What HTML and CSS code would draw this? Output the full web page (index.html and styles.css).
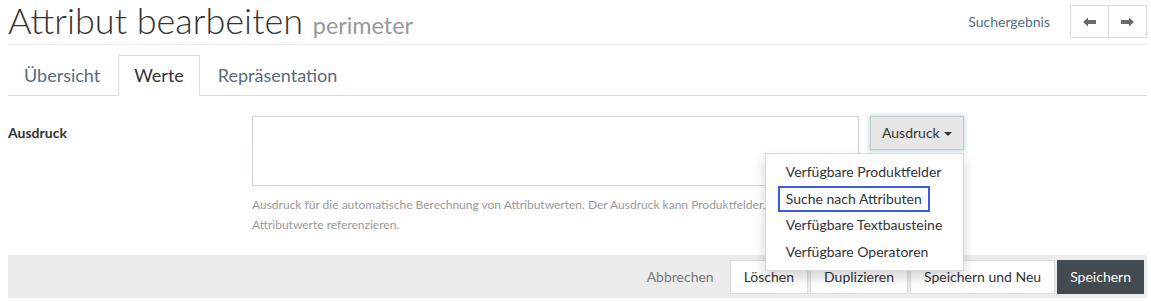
FILE: index.html
```html
<!DOCTYPE html>
<html>
<head>
  <title>Attribut bearbeiten</title>
  <link rel="stylesheet" href="styles.css">
</head>
<body>

<div class="page">
  <header class="page-header">
    <h1>Attribut bearbeiten <small>perimeter</small></h1>
    <div class="header-nav">
      <span class="search-result">Suchergebnis</span>
      <div class="btn-group">
        <button class="nav-btn" title="Zurück">
          <svg width="13" height="10" viewBox="0 0 13 10"><path d="M0 5 L5 0.5 V3 H13 V7 H5 V9.5 Z" fill="#6b6b6b"/></svg>
        </button>
        <button class="nav-btn" title="Weiter">
          <svg width="13" height="10" viewBox="0 0 13 10"><path d="M13 5 L8 0.5 V3 H0 V7 H8 V9.5 Z" fill="#6b6b6b"/></svg>
        </button>
      </div>
    </div>
  </header>

  <ul class="tabs">
    <li><a href="#">Übersicht</a></li>
    <li class="active"><a href="#">Werte</a></li>
    <li><a href="#">Repräsentation</a></li>
  </ul>

  <div class="form-row">
    <label class="control-label">Ausdruck</label>
    <div class="field">
      <textarea class="form-control"></textarea>
      <p class="help-block">Ausdruck für die automatische Berechnung von Attributwerten. Der Ausdruck kann Produktfelder, Textbausteine und Attributwerte referenzieren.</p>
    </div>
    <div class="dropdown">
      <button class="btn btn-toggle">Ausdruck <span class="caret"></span></button>
      <ul class="dropdown-menu">
        <li><a href="#">Verfügbare Produktfelder</a></li>
        <li><a href="#" class="focused">Suche nach Attributen</a></li>
        <li><a href="#">Verfügbare Textbausteine</a></li>
        <li><a href="#">Verfügbare Operatoren</a></li>
      </ul>
    </div>
  </div>

  <div class="form-actions">
    <a href="#" class="btn-link">Abbrechen</a>
    <button class="btn">Löschen</button>
    <button class="btn">Duplizieren</button>
    <button class="btn">Speichern und Neu</button>
    <button class="btn btn-primary">Speichern</button>
  </div>
</div>

</body>
</html>
```

FILE: styles.css
```css
body {
  font-family: Lato, 'Open Sans', sans-serif;
  font-size: 14px;
  line-height: 20px;
  color: #333;
  margin: 0;
  background: white;
}

.page {
  padding: 0 4px 0 8px;
}

.page-header {
  display: flex;
  justify-content: space-between;
  align-items: center;
  height: 40px;
  padding-bottom: 4px;
  border-bottom: 1px solid #eee;
}

h1 {
  margin: 0;
  font-size: 36px;
  font-weight: 300;
  line-height: 40px;
  color: #333;
}

h1 small {
  font-size: 23.4px;
  font-weight: 400;
  line-height: 1;
  color: #999;
}

.header-nav {
  display: flex;
  align-items: center;
  gap: 20px;
  margin-top: 3px;
}

.search-result {
  color: #5b6b7b;
}

.btn-group {
  display: flex;
}

.nav-btn {
  width: 39px;
  height: 33px;
  background: white;
  border: 1px solid #ddd;
  display: flex;
  align-items: center;
  justify-content: center;
  padding: 0;
  cursor: pointer;
}

.nav-btn + .nav-btn {
  margin-left: -1px;
}

.tabs {
  list-style: none;
  margin: 10px 0 0;
  padding: 0;
  display: flex;
  border-bottom: 1px solid #ddd;
}

.tabs li {
  margin-right: 2px;
  margin-bottom: -1px;
}

.tabs a {
  display: block;
  padding: 9px 15px 10px;
  font-size: 18px;
  line-height: 20px;
  color: #596a7c;
  text-decoration: none;
  border: 1px solid transparent;
}

.tabs .active a {
  color: #333;
  border-color: #ddd;
  border-bottom-color: white;
  background: white;
}

.form-row {
  display: grid;
  grid-template-columns: 244px 607px auto;
  margin-top: 20px;
}

.control-label {
  font-weight: bold;
  padding-top: 7px;
}

.form-control {
  display: block;
  box-sizing: border-box;
  width: 100%;
  height: 70px;
  margin: 0;
  border: 1px solid #ccd3d9;
  font-family: inherit;
  resize: none;
}

.help-block {
  width: 630px;
  margin: 9px 0 0;
  font-size: 12px;
  line-height: 20px;
  color: #999;
}

.dropdown {
  position: relative;
  margin-left: 11px;
  align-self: start;
  justify-self: start;
}

.btn {
  font-family: inherit;
  font-size: 14px;
  line-height: 20px;
  padding: 6px 12px;
  color: #333;
  background: white;
  border: 1px solid #d8dee2;
  cursor: pointer;
}

.btn-toggle {
  padding: 6px 11px;
  background: #e6e6e6;
  border-color: #c3cdd2;
  box-shadow: 0 0 4px 1px rgba(110, 165, 185, 0.45);
}

.caret {
  display: inline-block;
  width: 0;
  height: 0;
  margin-left: 1px;
  vertical-align: middle;
  border-top: 4px solid #333;
  border-left: 4px solid transparent;
  border-right: 4px solid transparent;
}

.dropdown-menu {
  position: absolute;
  top: 100%;
  right: 0;
  margin: 3px 0 0;
  padding: 5px 0;
  list-style: none;
  background: white;
  border: 1px solid rgba(0, 0, 0, 0.15);
  box-shadow: 0 6px 12px rgba(0, 0, 0, 0.175);
  white-space: nowrap;
  z-index: 10;
}

.dropdown-menu a {
  display: block;
  padding: 3px 21px 3px 20px;
  line-height: 20.5px;
  color: #333;
  text-decoration: none;
}

.dropdown-menu a.focused {
  display: inline-block;
  margin-left: 12px;
  padding: 1px 6px;
  border: 2px solid #3b5bf0;
}

.form-actions {
  display: flex;
  justify-content: flex-end;
  align-items: center;
  gap: 2px;
  margin-top: 20px;
  background: #ececec;
  padding: 5px 3px 4px;
}

.form-actions .btn {
  padding: 6px 13px;
}

.btn-link {
  color: #777;
  text-decoration: none;
  margin-right: 14px;
}

.form-actions .btn-primary {
  padding: 6px 12px;
  background: #434a50;
  border-color: #434a50;
  color: white;
}
```
